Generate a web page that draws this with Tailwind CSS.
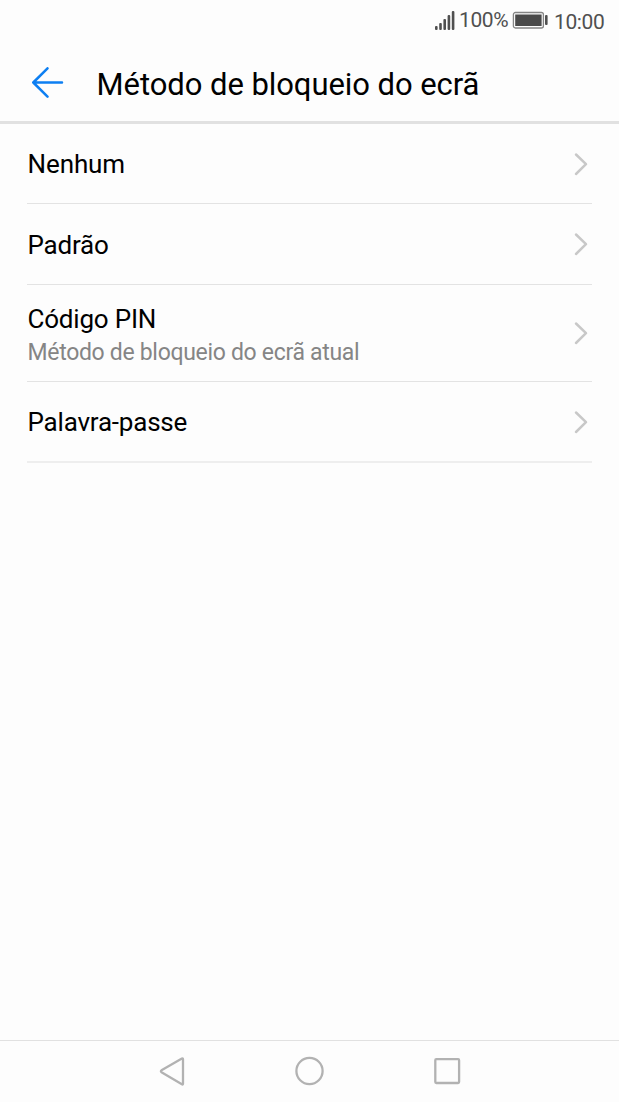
<!DOCTYPE html>
<html lang="pt">
<head>
<meta charset="utf-8">
<title>Método de bloqueio do ecrã</title>
<script src="https://cdn.jsdelivr.net/npm/@tailwindcss/browser@4"></script>
</head>
<body class="bg-[#fdfdfd] font-['Roboto',sans-serif] text-black">
<div class="flex h-[1102px] w-[619px] flex-col overflow-hidden">
  <div class="flex h-[41px] shrink-0 items-start justify-end pr-[14px] text-[21px] leading-6 tracking-[-0.4px] text-[#505050]">
    <svg class="mt-[10px] mr-[4px] h-5 w-[21px]" viewBox="0 0 21 20" fill="#505050"><rect x="1" y="16" width="2.6" height="4" rx="1"/><rect x="5.2" y="13" width="2.6" height="7" rx="1"/><rect x="9.4" y="9" width="2.6" height="11" rx="1"/><rect x="13.6" y="5" width="2.6" height="15" rx="1"/><rect x="17.8" y="1" width="2.6" height="19" rx="1"/></svg>
    <span class="mt-[8px] w-[49px] whitespace-nowrap">100%</span>
    <svg class="mt-[11px] mr-[5px] ml-[4px] h-[19px] w-[37px]" viewBox="0 0 37 19"><rect x="1.4" y="1.5" width="30" height="15.5" rx="2" fill="#fdfdfd" stroke="#858585" stroke-width="1.3"/><rect x="3.2" y="3.5" width="26.4" height="11.5" fill="#4a4a4a"/><rect x="33" y="4" width="2.6" height="10" rx="1" fill="#505050"/></svg>
    <span class="mt-[10px] w-[51px] whitespace-nowrap">10:00</span>
  </div>
  <header class="flex h-[83px] shrink-0 items-center border-b-3 border-[#e1e1e1] pl-8">
    <svg class="mt-[3px] h-8 w-8" viewBox="0 0 32 32" fill="none" stroke="#0d7ff2" stroke-width="2.5" stroke-linecap="round" stroke-linejoin="round"><path d="M30 15.5H1.5M15.5 1.3L1.3 15.5L15.5 29.7"/></svg>
    <h1 class="mt-[7px] ml-[32.5px] text-[31px] leading-9 tracking-[-0.06px] whitespace-nowrap">Método de bloqueio do ecrã</h1>
  </header>
  <main class="flex flex-1 flex-col px-[27px] text-[26px] tracking-[-0.2px]">
    <div class="flex h-20 items-center justify-between border-b border-[#e3e3e3]">
      <span class="pt-[2px] pl-[0.5px] tracking-[-0.1px]">Nenhum</span>
      <svg class="mr-[4px] h-6 w-[14px]" viewBox="0 0 14 24" fill="none" stroke="#c8c8c8" stroke-width="2.5" stroke-linecap="round" stroke-linejoin="round"><path d="M2 2.5L12 12.2L2 22"/></svg>
    </div>
    <div class="flex h-[81px] items-center justify-between border-b border-[#e3e3e3]">
      <span class="pt-[2px] pl-[0.5px]">Padrão</span>
      <svg class="mr-[4px] h-6 w-[14px]" viewBox="0 0 14 24" fill="none" stroke="#c8c8c8" stroke-width="2.5" stroke-linecap="round" stroke-linejoin="round"><path d="M2 2.5L12 12.2L2 22"/></svg>
    </div>
    <div class="flex h-[97px] items-center justify-between border-b border-[#e3e3e3]">
      <div class="flex flex-col pt-[5px] pl-[0.5px]"><span class="leading-[34px]">Código PIN</span><span class="text-[23px] leading-[33px] tracking-[-0.31px] text-[#858585]">Método de bloqueio do ecrã atual</span></div>
      <svg class="mr-[4px] h-6 w-[14px]" viewBox="0 0 14 24" fill="none" stroke="#c8c8c8" stroke-width="2.5" stroke-linecap="round" stroke-linejoin="round"><path d="M2 2.5L12 12.2L2 22"/></svg>
    </div>
    <div class="flex h-[81px] items-center justify-between border-b-2 border-[#eeeeee]">
      <span class="pt-[2px] pl-[0.5px]">Palavra-passe</span>
      <svg class="mr-[4px] h-6 w-[14px]" viewBox="0 0 14 24" fill="none" stroke="#c8c8c8" stroke-width="2.5" stroke-linecap="round" stroke-linejoin="round"><path d="M2 2.5L12 12.2L2 22"/></svg>
    </div>
  </main>
  <nav class="flex h-[62px] shrink-0 justify-center border-t border-[#e1e1e1]">
    <svg class="h-[61px] w-[340px]" viewBox="0 0 340 61" fill="none" stroke="#b2b2b2" stroke-width="2.3" stroke-linejoin="round"><path d="M43 18.2V42.8Q43 44 41.9 43.3L21.5 31.2Q20.3 30.2 21.5 29.3L41.9 17.5Q43 17 43 18.2Z"/><circle cx="169.5" cy="30" r="13.1"/><rect x="295.3" y="18.2" width="23.8" height="23.8" rx="1"/></svg>
  </nav>
</div>
</body>
</html>
